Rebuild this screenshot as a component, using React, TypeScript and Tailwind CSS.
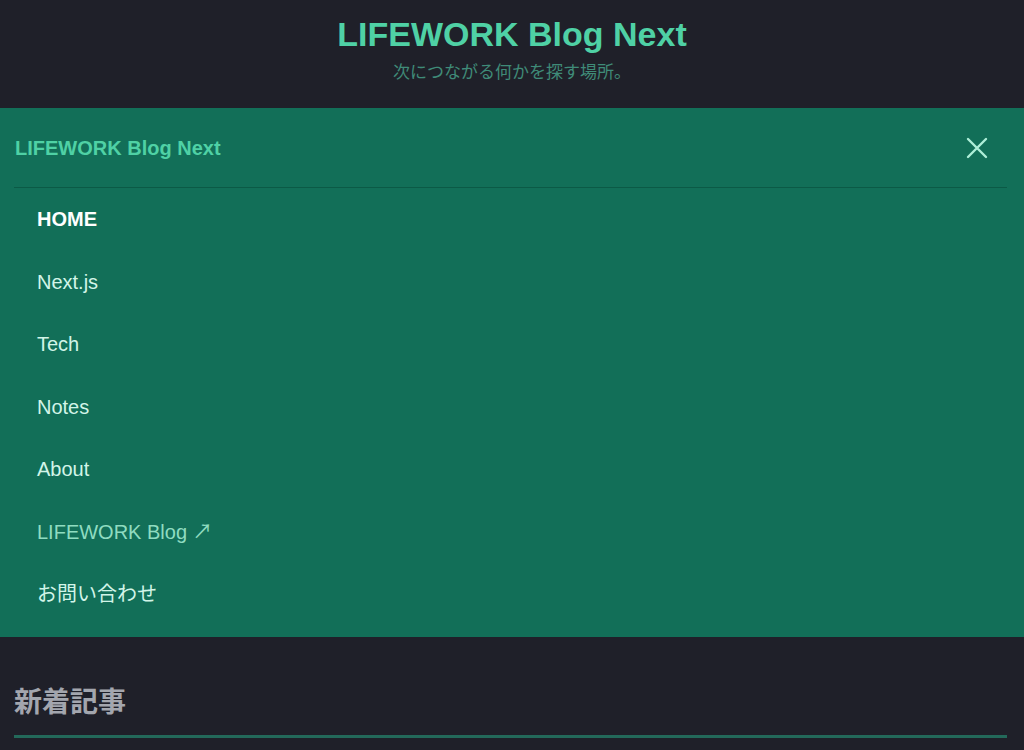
import React from "react";

const navItems: { label: string; kind: "active" | "normal" | "external" }[] = [
  { label: "HOME", kind: "active" },
  { label: "Next.js", kind: "normal" },
  { label: "Tech", kind: "normal" },
  { label: "Notes", kind: "normal" },
  { label: "About", kind: "normal" },
  { label: "LIFEWORK Blog ↗", kind: "external" },
  { label: "お問い合わせ", kind: "normal" },
];

export default function App() {
  return (
    <div
      className="min-h-[750px] w-full bg-[#1f2029]"
      style={{ fontFamily: '"Liberation Sans", Arial, "Noto Sans CJK JP", sans-serif' }}
    >
      {/* Site header */}
      <header className="flex flex-col items-center pt-[13px] pb-[23px]">
        <h1 className="text-[34px] leading-[42px] font-bold text-[#4fd1a5]">LIFEWORK Blog Next</h1>
        <p className="mt-[6px] text-[17px] leading-[24px] text-[#3f8b78]">次につながる何かを探す場所。</p>
      </header>

      {/* Mobile menu drawer */}
      <nav className="bg-[#126f58]">
        <div className="flex h-[79px] items-center justify-between pl-[15px] pr-[35px]">
          <span className="text-[20px] font-bold text-[#4fd1a5]">LIFEWORK Blog Next</span>
          <button className="flex h-[24px] w-[24px] items-center justify-center" aria-label="close">
            <svg width="22" height="22" viewBox="0 0 22 22" fill="none">
              <path d="M2 2L20 20M20 2L2 20" stroke="#aeeed8" strokeWidth="2.4" strokeLinecap="round" />
            </svg>
          </button>
        </div>
        <div className="ml-[14px] mr-[17px] h-px bg-[#0b5a46]" />
        <ul className="pb-[11px]">
          {navItems.map((item) => (
            <li key={item.label} className="flex h-[62.5px] items-center pl-[37px]">
              <span
                className={
                  item.kind === "active"
                    ? "text-[20px] font-bold text-white"
                    : item.kind === "external"
                    ? "text-[20px] text-[#8fdcc0]"
                    : "text-[20px] text-[#d2f5e8]"
                }
              >
                {item.label}
              </span>
            </li>
          ))}
        </ul>
      </nav>

      {/* Latest posts */}
      <section className="pl-[14px] pr-[17px] pt-[48px]">
        <h2 className="text-[28px] leading-[36px] font-bold text-[#a3a6ae]">新着記事</h2>
        <div className="mt-[14px] h-[3px] bg-[#23695a]" />
      </section>
    </div>
  );
}
